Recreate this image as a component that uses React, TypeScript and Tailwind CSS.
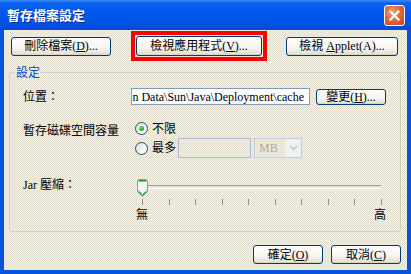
import React from 'react'

const FONT = "font-['Liberation_Serif','Noto_Sans_CJK_TC',serif]"

// XP dithered dialog face
const FACE =
  'bg-[repeating-conic-gradient(#f4f2e8_0%_25%,#e2decb_0%_50%)] bg-[length:2px_2px]'

function XpButton({ children, className = '' }: { children: React.ReactNode; className?: string }) {
  return (
    <button
      className={`flex items-center justify-center rounded-[3px] border border-[#003c74] bg-[linear-gradient(to_bottom,#ffffff_0%,#f5f4ee_60%,#e6e3d6_90%,#d6d0c5_100%)] text-[12px] leading-none text-black ${className}`}
    >
      {children}
    </button>
  )
}

function Radio({ checked }: { checked?: boolean }) {
  return (
    <span className="flex h-[13px] w-[13px] shrink-0 items-center justify-center rounded-full border border-[#1c5180] bg-[linear-gradient(135deg,#dcdcd5_0%,#f2f2ee_50%,#ffffff_100%)]">
      {checked && (
        <span className="h-[5px] w-[5px] rounded-full bg-[radial-gradient(circle_at_35%_35%,#7be07b,#21a121_70%)]" />
      )}
    </span>
  )
}

function Thumb() {
  return (
    <svg width="11" height="18" viewBox="0 0 11 18" className="absolute left-0 top-0">
      <path
        d="M0.5 2.5 Q0.5 0.5 2.5 0.5 H8.5 Q10.5 0.5 10.5 2.5 V12.5 L5.5 17.5 L0.5 12.5 Z"
        fill="#f4f4f0"
        stroke="#8b9b9f"
      />
      <path d="M1.5 1.5 H9.5" stroke="#1ea51e" />
      <path d="M1.5 2.5 H9.5" stroke="#6bd36b" />
      <path d="M1.5 12.5 L5.5 16.5 L9.5 12.5" stroke="#21a121" fill="none" />
      <path d="M1.5 11.5 L5.5 15.5 L9.5 11.5" stroke="#7bd67b" fill="none" />
    </svg>
  )
}

export default function App() {
  const ticks = Array.from({ length: 10 })
  return (
    <div className={`flex h-[274px] w-[411px] flex-col ${FONT} text-[12px] text-black`}>
      {/* title bar */}
      <div className="flex h-[30px] shrink-0 items-center justify-between bg-[linear-gradient(to_bottom,#3d8cf5_0%,#0a62f0_10%,#0058ee_40%,#0154e6_75%,#0048d8_100%)] pl-[7px] pr-[6px]">
        <span className="text-[13px] font-bold text-white [text-shadow:1px_1px_0_#0a2a8a] font-['Noto_Sans_CJK_TC',sans-serif]">
          暫存檔案設定
        </span>
        <span className="flex h-[21px] w-[21px] items-center justify-center rounded-[3px] border border-white bg-[radial-gradient(circle_at_40%_35%,#f0a080_0%,#e06a44_45%,#c7401d_100%)]">
          <svg width="11" height="11" viewBox="0 0 11 11">
            <path d="M1.5 1.5 L9.5 9.5 M9.5 1.5 L1.5 9.5" stroke="#fff" strokeWidth="2.2" strokeLinecap="square" />
          </svg>
        </span>
      </div>

      {/* body */}
      <div className={`flex flex-1 flex-col border-x-4 border-b-4 border-[#0753dd] ${FACE}`}>
        {/* top buttons */}
        <div className="mt-[1px] flex h-[30px] items-center">
          <XpButton className="ml-[7px] h-[19px] w-[100px]">
            刪除檔案(<span className="underline">D</span>)...
          </XpButton>
          <div className="ml-[20px] border-4 border-[#ff0000] p-[1px]">
            <XpButton className="h-[20px] w-[126px]">
              檢視應用程式(<span className="underline">V</span>)...
            </XpButton>
          </div>
          <XpButton className="ml-[19px] h-[19px] w-[112px]">
            檢視 <span className="ml-[3px] underline">A</span>pplet(A)...
          </XpButton>
        </div>

        {/* group box */}
        <fieldset className="ml-[5px] mt-[4px] w-[392px] rounded-[3px] border border-[#d0d0bf]">
          <legend className="ml-[5px] px-[1px] text-[12px] leading-[14px] text-[#0046d5] font-['Noto_Sans_CJK_TC',sans-serif]">
            設定
          </legend>
          <div className="flex flex-col pl-[13px] pb-[11px]">
            {/* location */}
            <div className="mt-[9px] flex h-[17px] items-center">
              <span className="w-[108px]">位置：</span>
              <div className="flex h-[17px] w-[179px] items-center justify-end whitespace-nowrap border border-[#7f9db9] bg-white pr-[5px] leading-none">
                n Data\Sun\Java\Deployment\cache
              </div>
              <XpButton className="ml-[6px] h-[16px] w-[70px]">
                變更(<span className="underline">H</span>)...
              </XpButton>
            </div>

            {/* disk space */}
            <div className="mt-[17px] flex">
              <span className="mt-[3px] w-[108px] leading-none">暫存磁碟空間容量</span>
              <div className="flex flex-col">
                <div className="flex h-[13px] items-center">
                  <span className="ml-[4px]"><Radio checked /></span>
                  <span className="ml-[4px] leading-none">不限</span>
                </div>
                <div className="mt-[3px] flex h-[20px] items-center">
                  <span className="ml-[4px]"><Radio /></span>
                  <span className="ml-[4px] leading-none">最多</span>
                  <div className="ml-[2px] h-[20px] w-[73px] border border-[#a9bdd3]" />
                  <div className="ml-[3px] flex h-[20px] w-[48px] items-center border border-[#c3d1df] pl-[4px] text-[#aca899]">
                    <span className="flex-1 leading-none">MB</span>
                    <span className="flex h-[18px] w-[16px] items-center justify-center bg-[#eef0f2]">
                      <svg width="9" height="6" viewBox="0 0 9 6">
                        <path d="M1 1 L4.5 4.5 L8 1" stroke="#c9c7ba" strokeWidth="1.6" fill="none" />
                      </svg>
                    </span>
                  </div>
                </div>
              </div>
            </div>

            {/* jar compression */}
            <div className="mt-[21px] flex">
              <span className="w-[108px] leading-none">Jar 壓縮：</span>
              <div className="relative ml-[6px] w-[250px]">
                <Thumb />
                <div className="ml-[6px] mr-[6px] mt-[6px] h-[4px] border-t border-[#9d9d92] border-b border-b-white bg-[#e8e6da]" />
                <div className="mt-[10px] flex justify-between px-[5px]">
                  {ticks.map((_, i) => (
                    <span key={i} className="h-[6px] w-px bg-[#8e8f88]" />
                  ))}
                </div>
                <div className="-ml-[1px] mt-[3px] flex justify-between pr-[1px] leading-[12px] font-['Noto_Sans_CJK_TC',sans-serif]">
                  <span>無</span>
                  <span>高</span>
                </div>
              </div>
            </div>
          </div>
        </fieldset>

        {/* bottom buttons */}
        <div className="mt-[13px] flex justify-end gap-[8px] pr-[6px]">
          <XpButton className="h-[19px] w-[70px]">
            確定(<span className="underline">O</span>)
          </XpButton>
          <XpButton className="h-[19px] w-[70px]">
            取消(<span className="underline">C</span>)
          </XpButton>
        </div>
      </div>
    </div>
  )
}
